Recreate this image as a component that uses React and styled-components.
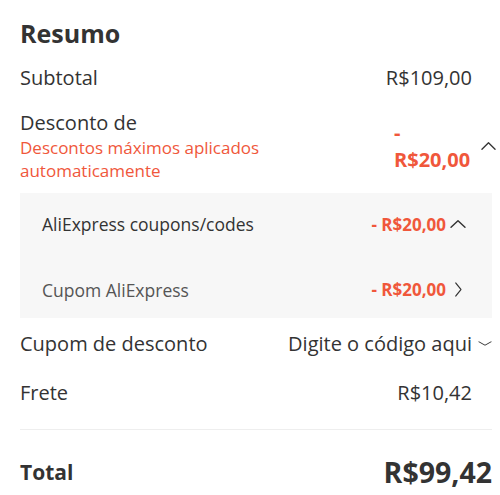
import React from "react";
import styled, { createGlobalStyle } from "styled-components";

const colors = {
  text: "#333333",
  muted: "#555555",
  red: "#f0573b",
  panel: "#f7f7f7",
  line: "#eeeeee",
};

const GlobalStyle = createGlobalStyle`
  *, *::before, *::after {
    box-sizing: border-box;
  }
  body {
    margin: 0;
    background: #ffffff;
    font-family: "Open Sans", "Noto Sans", sans-serif;
    color: ${colors.text};
  }
`;

const Wrapper = styled.div`
  width: 500px;
  padding: 14px 8px 0 20px;
  display: flex;
  flex-direction: column;
`;

const Title = styled.h2`
  margin: 0 0 10px;
  font-size: 25px;
  font-weight: 700;
  line-height: 38px;
`;

const Row = styled.div`
  display: flex;
  align-items: center;
  justify-content: space-between;
  height: ${(p) => p.$h || 46}px;
  margin-top: ${(p) => p.$mt || 0}px;
  padding-top: ${(p) => p.$pt || 0}px;
  font-size: 20px;
`;

const Label = styled.div`
  display: flex;
  flex-direction: column;
  line-height: 26px;
`;

const Sub = styled.span`
  color: ${colors.red};
  font-size: 17px;
  line-height: 23px;
`;

const Right = styled.div`
  display: flex;
  align-items: center;
  margin-right: ${(p) => p.$mr || 0}px;
`;

const Value = styled.span`
  color: ${(p) => (p.$red ? colors.red : colors.text)};
  font-weight: ${(p) => (p.$bold ? 700 : 400)};
  font-size: ${(p) => p.$size || 20}px;
  ${(p) => p.$narrow && "width: 82px; line-height: 27px;"}
`;

const Icon = styled.span`
  display: flex;
  justify-content: center;
  width: ${(p) => p.$w || 20}px;
  padding-top: ${(p) => p.$pt || 0}px;
`;

const Panel = styled.div`
  margin-top: 12px;
  background: ${colors.panel};
  padding: 0 22px 0 22px;
  display: flex;
  flex-direction: column;
`;

const PanelRow = styled.div`
  display: flex;
  align-items: center;
  justify-content: space-between;
  height: ${(p) => p.$h}px;
  padding-top: ${(p) => p.$pt || 0}px;
  font-size: 17.5px;
  color: ${(p) => (p.$dark ? colors.text : colors.muted)};
`;

const Divider = styled.div`
  height: 1px;
  background: ${colors.line};
  margin-top: 12px;
`;

const Chevron = ({ dir = "up", w = 15, h = 15 }) => {
  const paths = {
    up: "M1 11 L8 4 L15 11",
    down: "M1 5 L8 11 L15 5",
    right: "M5 1 L12 8 L5 15",
  };
  return (
    <svg width={w} height={h} viewBox="0 0 16 16" fill="none" preserveAspectRatio="none">
      <path d={paths[dir]} stroke="#333" strokeWidth="1.4" strokeLinecap="round" strokeLinejoin="round" />
    </svg>
  );
};

export default function App() {
  return (
    <>
      <GlobalStyle />
      <Wrapper>
        <Title>Resumo</Title>
        <Row $h={30}>
          <span>Subtotal</span>
          <Right>
            <Value>R$109,00</Value>
            <Icon />
          </Right>
        </Row>
        <Row $h={71} $mt={18}>
          <Label>
            <span>Desconto de</span>
            <Sub>Descontos máximos aplicados</Sub>
            <Sub>automaticamente</Sub>
          </Label>
          <Right $mr={-8}>
            <Value $red $bold $narrow>- R$20,00</Value>
            <Icon $w={24} $pt={2}>
              <Chevron dir="up" w={15} h={15} />
            </Icon>
          </Right>
        </Row>
        <Panel>
          <PanelRow $h={62} $dark>
            <span>AliExpress coupons/codes</span>
            <Right>
              <Value $red $bold $size={17}>- R$20,00</Value>
              <Icon $w={24}>
                <Chevron dir="up" w={16} h={15} />
              </Icon>
            </Right>
          </PanelRow>
          <PanelRow $h={63} $pt={6}>
            <span>Cupom AliExpress</span>
            <Right>
              <Value $red $bold $size={17}>- R$20,00</Value>
              <Icon $w={24}>
                <Chevron dir="right" w={12} h={15} />
              </Icon>
            </Right>
          </PanelRow>
        </Panel>
        <Row $h={50}>
          <span>Cupom de desconto</span>
          <Right $mr={-6}>
            <Value>Digite o código aqui</Value>
            <Icon $w={26}>
              <Chevron dir="down" w={14} h={9} />
            </Icon>
          </Right>
        </Row>
        <Row $h={49}>
          <span>Frete</span>
          <Right>
            <Value>R$10,42</Value>
            <Icon />
          </Right>
        </Row>
        <Divider />
        <Row $h={64} $pt={20}>
          <Value $bold $size={21}>Total</Value>
          <Value $bold $size={28.5}>R$99,42</Value>
        </Row>
      </Wrapper>
    </>
  );
}
